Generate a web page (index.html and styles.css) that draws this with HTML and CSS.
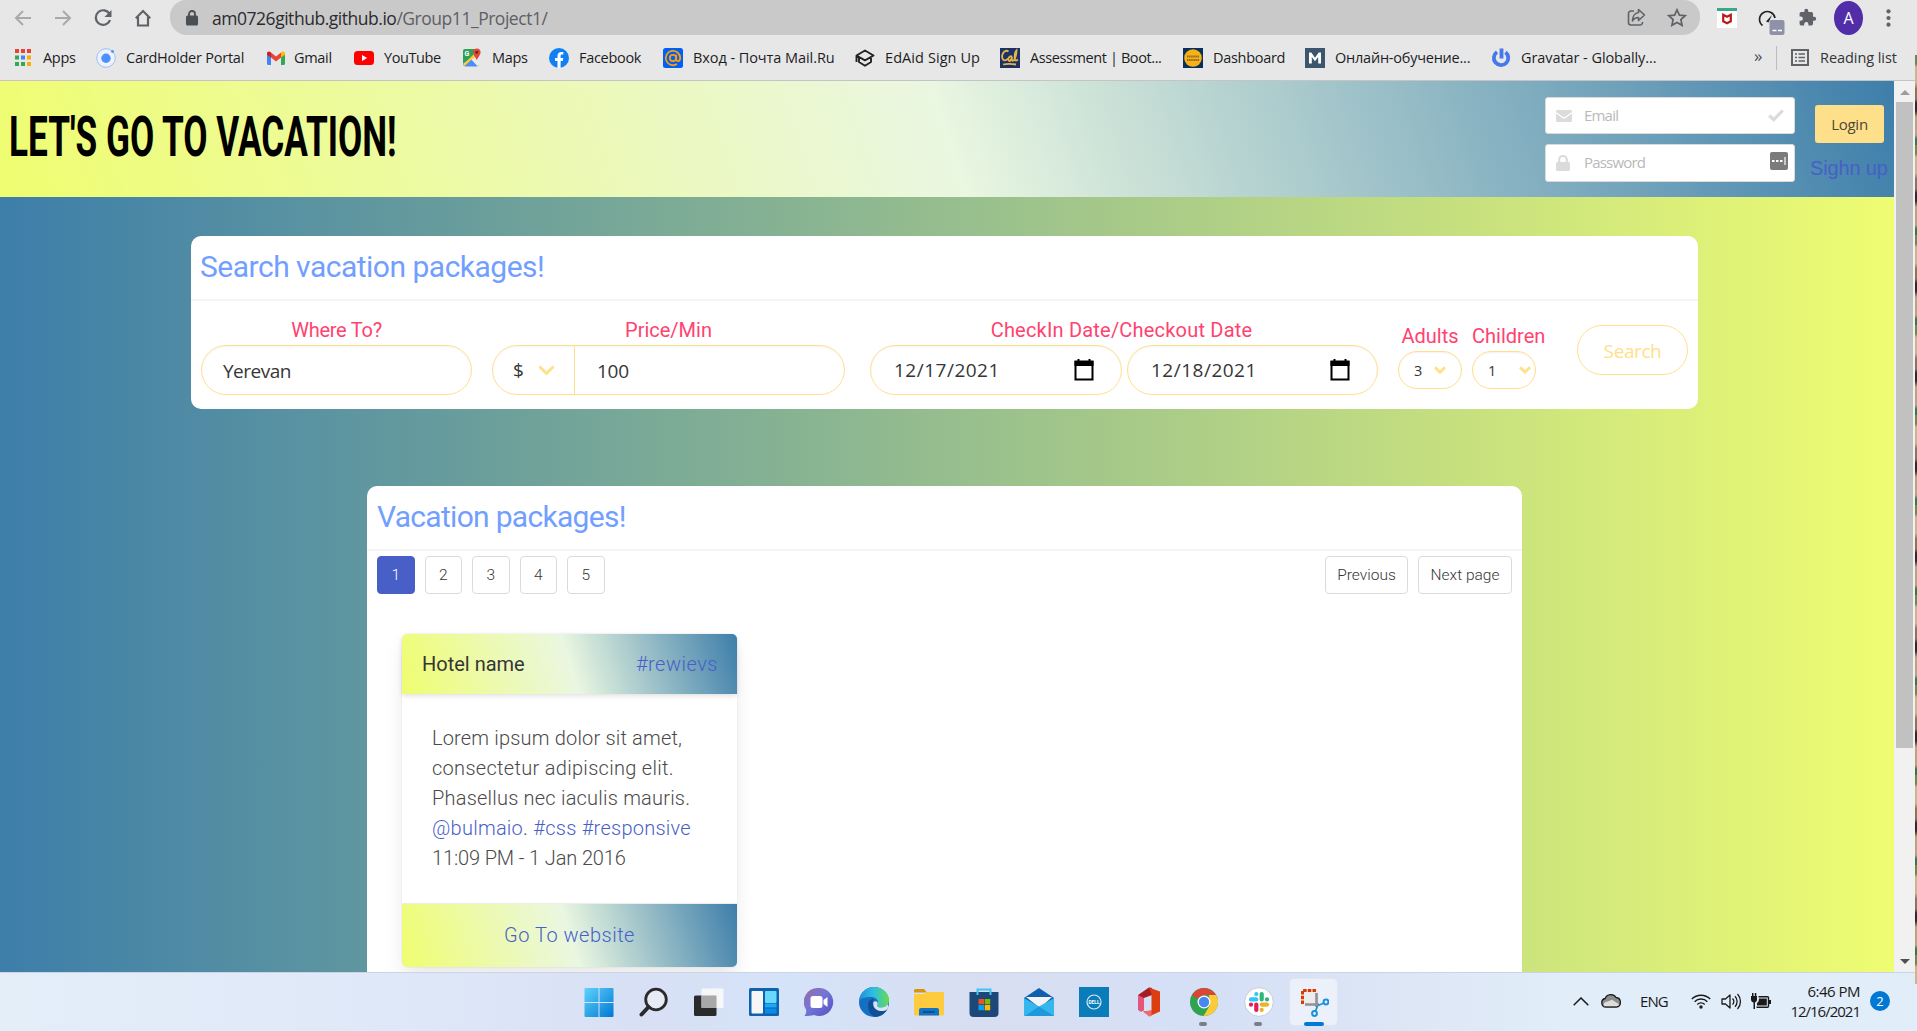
FILE: index.html
```html
<!DOCTYPE html>
<html lang="en">
<head>
<meta charset="utf-8">
<title>Let's go to vacation!</title>
<link rel="stylesheet" href="styles.css">
</head>
<body>
<header class="browser">
  <div class="toolbar">
    <div class="nav-buttons">
      <svg width="18" height="18" viewBox="0 0 18 18" fill="none" stroke="#a9a9aa" stroke-width="2"><path d="M17 9H2M9 2L2 9l7 7"/></svg>
      <svg width="18" height="18" viewBox="0 0 18 18" fill="none" stroke="#a9a9aa" stroke-width="2"><path d="M1 9h15M9 2l7 7-7 7"/></svg>
      <svg width="18" height="18" viewBox="0 0 18 18" fill="none" stroke="#5f6368" stroke-width="2.2"><path d="M15.5 5A7.3 7.3 0 1 0 16 11"/><path d="M17.5 1v7h-7z" fill="#5f6368" stroke="none"/></svg>
      <svg width="18" height="18" viewBox="0 0 18 18" fill="none" stroke="#5f6368" stroke-width="2.2"><path d="M1.8 9.2L9 2l7.2 7.2M4 8v8.5h10V8"/></svg>
    </div>
    <div class="omnibox">
      <svg width="12" height="16" viewBox="0 0 12 16"><rect y="5.5" width="12" height="10" rx="1.5" fill="#4b4e52"/><path d="M3 6V4a3 3 0 0 1 6 0v2" fill="none" stroke="#4b4e52" stroke-width="1.8"/></svg>
      <span class="url">am0726github.github.io<span class="path">/Group11_Project1/</span></span>
      <svg class="share" width="19" height="19" viewBox="0 0 19 19" fill="none" stroke="#5f6368" stroke-width="1.6" stroke-linejoin="round"><path d="M7 3H4a2.5 2.5 0 0 0-2.500 2.500v9A2.500 2.500 0 0 0 4 17h9a2.500 2.500 0 0 0 2.500-2.500V14"/><path d="M11.500 1.500L17.500 7l-6 5.500V9.500C8.500 9.500 6.500 11 5.500 13c0-4 2-8 6-8.500z"/></svg>
      <svg width="20" height="19" viewBox="0 0 20 19" fill="none" stroke="#5f6368" stroke-width="1.700"><path d="M10 1.800l2.400 5.300 5.800.6-4.300 3.900 1.200 5.700L10 14.400l-5.100 2.900 1.200-5.700-4.300-3.900 5.800-.6z"/></svg>
    </div>
    <div class="extensions">
      <svg width="20" height="20" viewBox="0 0 20 20"><rect width="20" height="20" fill="#fff"/><rect width="20" height="3" fill="#3aa68a"/><path d="M6.200 6.800l3.800 2 3.800-2v6.500l-3.800 2-3.800-2z" fill="none" stroke="#c01818" stroke-width="2.200"/></svg>
      <svg width="27" height="27" viewBox="0 0 27 27"><path d="M4.500 17.500A7.800 7.800 0 1 1 17 10" fill="none" stroke="#222" stroke-width="1.700"/><path d="M8 13.500L14 7l-3.500 7.500z" fill="#222"/><rect x="11.500" y="12" width="15" height="15" rx="2" fill="#8e92a8"/><path d="M14.500 22.500h4M20 22.500h4" stroke="#fff" stroke-width="1.500"/></svg>
      <svg width="19" height="19" viewBox="0 0 24 24"><path fill="#5f6368" d="M20.500 11H19V7a2 2 0 0 0-2-2h-4V3.500a2.500 2.500 0 0 0-5 0V5H4a2 2 0 0 0-2 2v3.800h1.500a2.700 2.700 0 0 1 0 5.400H2V20a2 2 0 0 0 2 2h3.800v-1.500a2.700 2.700 0 0 1 5.400 0V22H17a2 2 0 0 0 2-2v-4h1.500a2.500 2.500 0 0 0 0-5z"/></svg>
      <span class="avatar">A</span>
      <svg width="5" height="18" viewBox="0 0 5 18" fill="#5f6368"><circle cx="2.500" cy="2.300" r="2.100"/><circle cx="2.500" cy="9" r="2.100"/><circle cx="2.500" cy="15.700" r="2.100"/></svg>
    </div>
  </div>
  <nav class="bookmarks">
    <a class="bm apps"><svg width="16" height="17" viewBox="0 0 16 17"><path fill="#ea4335" d="M0 0h4v4H0zM6 0h4v4H6zM12 0h4v4h-4z"/><path fill="#34a853" d="M0 6.500h4v4H0zM0 13h4v4H0zM6 13h4v4H6z"/><path fill="#4285f4" d="M6 6.500h4v4H6z"/><path fill="#fbac05" d="M12 6.500h4v4h-4zM12 13h4v4h-4z"/></svg><span>Apps</span></a>
    <a class="bm"><svg width="20" height="20" viewBox="0 0 20 20"><circle cx="10" cy="10" r="9.300" fill="#eef2fa" stroke="#9fbdf0"/><circle cx="10" cy="10.300" r="4.700" fill="#4d90fe"/><circle cx="16.500" cy="3.500" r="1.400" fill="#4d90fe"/></svg><span>CardHolder Portal</span></a>
    <a class="bm"><svg width="20" height="20" viewBox="0 0 20 20"><path fill="#4285f4" d="M1 5v10.500A1.500 1.500 0 0 0 2.500 17H5V8.500z"/><path fill="#34a853" d="M15 17h2.500a1.500 1.500 0 0 0 1.500-1.500V5l-4 3.500z"/><path fill="#ea4335" d="M5 4.500l5 4 5-4v5L10 13.500l-5-4z"/><path fill="#c5221f" d="M1 5.500C1 3.300 3.300 2.800 5 4.500v5L1 6.700z"/><path fill="#fbbc04" d="M19 5.500c0-2.200-2.300-2.700-4-1v5l4-2.800z"/></svg><span>Gmail</span></a>
    <a class="bm"><svg width="20" height="20" viewBox="0 0 20 20"><rect y="3" width="20" height="14" rx="3.500" fill="#f00"/><path d="M8 7l5.200 3L8 13z" fill="#fff"/></svg><span>YouTube</span></a>
    <a class="bm"><svg width="20" height="20" viewBox="0 0 20 20"><rect x="1" y="1" width="16" height="17" rx="2" fill="#2fa05a"/><path d="M1 16L14 6l3 3v8l-2 1z" fill="#e8eaed"/><path d="M3 18l6-7 6 7z" fill="#4f8df5"/><path d="M1 17L14 4l2 2L3 18z" fill="#fbce2d"/><path d="M2.500 18.500L9 12l6.500 6.500z" fill="#4f8df5"/><text x="2.500" y="8" font-size="7" font-family="Roboto" font-weight="700" fill="#fff">G</text><path d="M14.800 12C13 8.500 11 7 11 4.300a3.800 3.800 0 0 1 7.600 0C18.600 7 16.500 8.500 14.800 12z" fill="#dd4b3e"/><circle cx="14.800" cy="4.300" r="1.400" fill="#6f1d12"/></svg><span>Maps</span></a>
    <a class="bm"><svg width="20" height="20" viewBox="0 0 20 20"><circle cx="10" cy="10" r="10" fill="#1081f2"/><path fill="#fff" d="M8.500 20v-7H6v-3h2.500V7.800c0-2.500 1.500-3.900 3.800-3.900l2 .2v2.500h-1.200c-1.200 0-1.500.7-1.500 1.500V10h2.700l-.5 3h-2.200v7z"/></svg><span>Facebook</span></a>
    <a class="bm"><svg width="20" height="20" viewBox="0 0 20 20"><rect width="20" height="20" rx="2.500" fill="#005ff9"/><g fill="none" stroke="#ff9e00" stroke-width="1.800"><circle cx="10" cy="10" r="3.200"/><path d="M13.200 6.800V11c0 3 4 3 4-1A7.200 7.200 0 1 0 14 16"/></g></svg><span>Вход - Почта Mail.Ru</span></a>
    <a class="bm"><svg width="20" height="20" viewBox="0 0 20 20" fill="none" stroke="#222" stroke-width="1.900" stroke-linejoin="round"><path d="M1.500 7.500L10 2.500l8.500 5L10 12.300zM4 10v4l6 3.800 6-3.800v-4M1.500 8v6"/></svg><span>EdAid Sign Up</span></a>
    <a class="bm"><svg width="20" height="20" viewBox="0 0 20 20"><rect width="20" height="20" fill="#1d3264"/><path d="M8.500 3.500C5 1 1 6 2.500 10.500c1 3 4 2 5.500 0M12 8.500c-3-1.500-5 4-2.500 4.500 1.500 0 2-2 2.500-4.500-.5 3 0 5 1.500 4s3-6 3-10c-2 2-3 11 0 10l1.500-1M3 16.500c4-1 8-1 13 0" fill="none" stroke="#e5b64a" stroke-width="1.800"/></svg><span>Assessment | Boot...</span></a>
    <a class="bm"><svg width="20" height="20" viewBox="0 0 20 20"><rect width="20" height="20" fill="#0b2f5b"/><circle cx="10" cy="10" r="8.800" fill="#f9b215"/><path d="M4 8.500h12M4 12h12" stroke="#8a6a2a" stroke-width="1.800" stroke-dasharray="1.500 .6"/></svg><span>Dashboard</span></a>
    <a class="bm"><svg width="20" height="20" viewBox="0 0 20 20"><rect width="20" height="20" fill="#3d566e"/><path d="M4 15.500V4.500h2.300L10 9.700l3.700-5.200H16v11h-2.800V9L10 13.300 6.800 9v6.500z" fill="#fff"/></svg><span>Онлайн-обучение...</span></a>
    <a class="bm"><svg width="20" height="20" viewBox="0 0 20 20" fill="none" stroke="#4678eb" stroke-width="3.800"><path d="M10.500 .5v10M14.500 4.300a7.200 7.200 0 1 1-8.500-.3"/></svg><span>Gravatar - Globally...</span></a>
    <span class="more">»</span>
    <span class="reading"><svg width="18" height="17" viewBox="0 0 18 17"><path d="M1 1h16v15H1z" fill="none" stroke="#5f6368" stroke-width="2"/><path d="M4 5h2M4 8.500h2M4 12h2M7.500 5H14M7.500 8.500H14M7.500 12H14" stroke="#5f6368" stroke-width="1.700"/></svg><span>Reading list</span></span>
  </nav>
</header>

<div class="viewport">
  <main class="page">
    <section class="hero">
      <h1>LET'S GO TO VACATION!</h1>
      <form class="login">
        <div class="fields">
          <label class="field email"><svg width="16" height="12" viewBox="0 0 16 12" fill="#dbdbdb"><path d="M1.500 0h13A1.500 1.500 0 0 1 16 1.500V2L8 7.500 0 2v-.5A1.500 1.500 0 0 1 1.500 0zM0 3.500L8 9l8-5.500v7a1.500 1.500 0 0 1-1.500 1.500h-13A1.500 1.500 0 0 1 0 10.500z"/></svg><span>Email</span><svg width="16" height="13" viewBox="0 0 16 13" fill="none" stroke="#dbdbdb" stroke-width="3.200"><path d="M1.200 6.500l4.500 4.200 9-9.200"/></svg></label>
          <label class="field password"><svg width="14" height="16" viewBox="0 0 14 16"><rect y="7" width="14" height="9" rx="1.500" fill="#dbdbdb"/><path d="M3.200 8V4.800a3.800 3.800 0 0 1 7.600 0V8" fill="none" stroke="#dbdbdb" stroke-width="2.200"/></svg><span>Password</span><svg class="key" width="18" height="18" viewBox="0 0 18 18"><rect width="18" height="18" rx="2" fill="#7b7b7b"/><path d="M2 9h2.500M6 9h2.500M10 9h2.500" stroke="#fff" stroke-width="2.200"/><path d="M15 5v8" stroke="#fff" stroke-width="1.200"/></svg></label>
        </div>
        <div class="actions">
          <button type="button">Login</button>
          <a>Sighn up</a>
        </div>
      </form>
    </section>

    <section class="card search">
      <h2>Search vacation packages!</h2>
      <div class="filters">
        <div class="group where"><span class="label">Where To?</span><div class="pill"><span>Yerevan</span></div></div>
        <div class="group price"><span class="label">Price/Min</span>
          <div class="pill split"><span class="currency">$ <svg width="17" height="11" viewBox="0 0 17 11" fill="none" stroke="#ffe08a" stroke-width="3"><path d="M1.500 1.500l7 7 7-7"/></svg></span><span class="amount">100</span></div></div>
        <div class="group dates"><span class="label">CheckIn Date/Checkout Date</span>
          <div class="pair">
            <div class="pill date"><span>12/17/2021</span><svg width="20" height="22" viewBox="0 0 20 22"><path d="M1.500 2.500h17v18h-17z" fill="none" stroke="#000" stroke-width="2"/><path d="M.5 2h19v5H.5zM3.500 0h2v3h-2zM14.500 0h2v3h-2z"/></svg></div>
            <div class="pill date"><span>12/18/2021</span><svg width="20" height="22" viewBox="0 0 20 22"><path d="M1.500 2.500h17v18h-17z" fill="none" stroke="#000" stroke-width="2"/><path d="M.5 2h19v5H.5zM3.500 0h2v3h-2zM14.500 0h2v3h-2z"/></svg></div>
          </div></div>
        <div class="group small adults"><span class="label">Adults</span><div class="pill"><span>3</span><svg width="12" height="8" viewBox="0 0 12 8" fill="none" stroke="#ffe08a" stroke-width="2.800"><path d="M1 1.200l5 5 5-5"/></svg></div></div>
        <div class="group small children"><span class="label">Children</span><div class="pill"><span>1</span><svg width="12" height="8" viewBox="0 0 12 8" fill="none" stroke="#ffe08a" stroke-width="2.800"><path d="M1 1.200l5 5 5-5"/></svg></div></div>
        <button class="go" type="button">Search</button>
      </div>
    </section>

    <section class="card packages">
      <h2>Vacation packages!</h2>
      <div class="pagination">
        <a class="current">1</a><a>2</a><a>3</a><a>4</a><a>5</a>
        <a class="step previous">Previous</a><a class="step next">Next page</a>
      </div>
      <article class="hotel">
        <header><strong>Hotel name</strong><a>#rewievs</a></header>
        <div class="content">
          <p class="l1">Lorem ipsum dolor sit amet,</p>
          <p class="l2">consectetur adipiscing elit.</p>
          <p class="l3">Phasellus nec iaculis mauris.</p>
          <p class="l4"><a>@bulmaio</a>. <a>#css</a> <a>#responsive</a></p>
          <p class="l5">11:09 PM - 1 Jan 2016</p>
        </div>
        <footer><a>Go To website</a></footer>
      </article>
    </section>
  </main>
  <div class="scrollbar"><i class="up"></i><i class="thumb"></i><i class="down"></i></div>
</div>
<div class="wallpaper"></div>

<footer class="taskbar">
  <div class="apps-row">
    <span class="app"><svg width="30" height="30" viewBox="0 0 30 30"><defs><linearGradient id="win" x1="0" y1="0" x2="1" y2="1"><stop offset="0" stop-color="#5fd3fb"/><stop offset="1" stop-color="#0078d4"/></linearGradient></defs><path fill="url(#win)" d="M.5 2a1 1 0 0 1 1-1H14.500v14H.5zM15.500 1h13a1 1 0 0 1 1 1v13h-14zM.5 16h14v14h-13a1 1 0 0 1-1-1zM15.500 16h14v13a1 1 0 0 1-1 1h-13z"/></svg></span>
    <span class="app"><svg width="30" height="30" viewBox="0 0 30 30" fill="none" stroke="#2b2b2e"><circle cx="17" cy="12.500" r="10.300" stroke-width="2.800" fill="#e6ebf6"/><path d="M9.500 20l-7 7.500" stroke-width="4" stroke-linecap="round"/></svg></span>
    <span class="app"><svg width="30" height="30" viewBox="0 0 30 30"><rect x="0" y="8.500" width="22.500" height="20.500" rx="1.500" fill="#2b2b2b"/><rect x="7.500" y="1.500" width="22" height="19.500" rx="1" fill="#f8f8f8" fill-opacity=".92"/><path d="M7.500 8.500h15V21h-15z" fill="#a9a9a9"/></svg></span>
    <span class="app"><svg width="30" height="30" viewBox="0 0 30 30"><rect y="1" width="30" height="28" rx="1.500" fill="#0e62ae"/><rect x="2.500" y="4" width="11.500" height="22.500" rx="1" fill="#f6f6f6"/><rect x="16" y="4" width="11.500" height="12" rx="1" fill="#67d9fc"/><path d="M16 16.500h11.500v4H16z" fill="#1ba8f4"/><path d="M16 21.500h11.500v5H16z" fill="#0a8bea"/></svg></span>
    <span class="app"><svg width="30" height="30" viewBox="0 0 30 30"><defs><linearGradient id="chat" x1="0" y1="0" x2="1" y2="1"><stop offset="0" stop-color="#9a6ba5"/><stop offset=".45" stop-color="#7476d6"/><stop offset="1" stop-color="#5250c4"/></linearGradient></defs><path d="M15 1a14 14 0 1 1-5 27c-3 .8-6 1-9.500 1 1.500-2 2-4 1.500-6.500A14 14 0 0 1 15 1z" fill="url(#chat)"/><rect x="6.500" y="9" width="12" height="12" rx="2.500" fill="#fff"/><path d="M19.500 13l4-3v10l-4-3z" fill="#fff"/></svg></span>
    <span class="app"><svg width="30" height="30" viewBox="0 0 30 30"><defs><linearGradient id="edge"><stop offset="0" stop-color="#1d8fdc"/><stop offset=".5" stop-color="#2fc0e0"/><stop offset="1" stop-color="#66db4a"/></linearGradient></defs><circle cx="15" cy="15" r="15" fill="#1470c2"/><path d="M0 14C1 5 8 0 15 0c8 0 15 5.500 15 13 0 5-4 7.500-8 7.500-3.500 0-4.500-1.500-3.500-3 2-3-1-7.500-6-7.500C6 9.500 1 12 0 14z" fill="url(#edge)"/><path d="M9 18c0-4 3-6.500 6-6-3 4-1 11 6 12 3 .3 5.500-.5 7.500-2C26 27 21 30 16 30c-5-2-7-7-7-12z" fill="#104f97"/><path d="M18.500 17.500c-1 1.500 0 3 3.500 3 2.500 0 5.500-1 7-3.500 0 2 .5 3.500-1 5.500-2 1.500-4.500 1.800-7 1.500-5-.8-7.500-5-6.500-9 2-1.500 5-.5 4 2.500z" fill="#dbe3f6"/></svg></span>
    <span class="app"><svg width="30" height="30" viewBox="0 0 30 30"><path d="M0 3.500A1.500 1.500 0 0 1 1.500 2H10l3 3.500H0z" fill="#d7960b"/><path d="M0 7h10l2.500-2H29a1 1 0 0 1 1 1v21.500a1 1 0 0 1-1 1H1a1 1 0 0 1-1-1z" fill="#fecb3e"/><path d="M5 28.500V23a2 2 0 0 1 2-2h16a2 2 0 0 1 2 2v5.500z" fill="#1272c4"/><path d="M9 25h12" stroke="#0a4586" stroke-width="1.500"/></svg></span>
    <span class="app"><svg width="30" height="30" viewBox="0 0 30 30"><path d="M8.500 7V2.500h13V7" fill="none" stroke="#3ec5f2" stroke-width="2"/><path d="M.5 5h29v21a4 4 0 0 1-4 4h-21a4 4 0 0 1-4-4z" fill="#1b4878"/><path d="M8.500 8V5M21.500 8V5" stroke="#3ec5f2" stroke-width="2"/><path fill="#f25022" d="M9.500 12h5.500v5.300H9.500z"/><path fill="#7fba00" d="M15.700 12h5.500v5.300h-5.500z"/><path fill="#00a4ef" d="M9.500 18h5.500v5.300H9.500z"/><path fill="#ffb900" d="M15.700 18h5.500v5.300h-5.500z"/></svg></span>
    <span class="app"><svg width="30" height="30" viewBox="0 0 30 30"><path d="M0 11L15 1l15 10v8H0z" fill="#0f5fae"/><path d="M2 10h26l-12 11z" fill="#f3f3f3"/><path d="M0 11l15 8.500L30 11v17.500a.5.500 0 0 1-.5.500H.5a.5.500 0 0 1-.5-.5z" fill="#35b7ee"/><path d="M15 19.500L30 29H1z" fill="#1e98dc"/></svg></span>
    <span class="app"><svg width="30" height="30" viewBox="0 0 30 30"><rect width="30" height="30" fill="#0b7cba"/><circle cx="15" cy="15" r="7" fill="none" stroke="#d5eaf5" stroke-width="1.200"/><text x="15" y="17.200" text-anchor="middle" font-family="Roboto" font-weight="700" font-size="5.500" textLength="11" lengthAdjust="spacingAndGlyphs" fill="#fff">DELL</text></svg></span>
    <span class="app"><svg width="30" height="30" viewBox="0 0 30 30"><path d="M4 8L15 .5l3 .5v7l-8 3v12l-3 1.500-3-2z" fill="#a61d25"/><path d="M4 8l6 3v12l-4 1.500-2-2z" fill="#e6557a"/><path d="M15 .5l11 4v20l-10 4.500-7-4.500 8.500-1V7z" fill="#dc3e12"/><path d="M9 24.500l8.500-1V29L15 29.500z" fill="#f06a6a"/></svg></span>
    <span class="app open"><svg width="30" height="30" viewBox="0 0 30 30"><circle cx="15" cy="15" r="14" fill="#2fa350"/><path d="M2.900 8A14 14 0 0 1 27.100 8H15l-6.500 3.500z" fill="#db4437"/><path d="M27.100 8A14 14 0 0 1 14.500 29l6.300-10.500L20 8z" fill="#fdcb3a"/><circle cx="15" cy="15" r="6.500" fill="#fff"/><circle cx="15" cy="15" r="5.200" fill="#4587f3"/></svg></span>
    <span class="app open"><svg width="30" height="30" viewBox="0 0 30 30"><circle cx="15" cy="15" r="14.300" fill="#fff" stroke="#c9ced8"/><g stroke-width="4.200" stroke-linecap="round"><path d="M12.300 7v.1M7 12.400h5.300" stroke="#36c5f0"/><path d="M17.700 7v5.400M23 12.300v.1" stroke="#2eb67d"/><path d="M17.700 17.600H23M17.700 22.900v.1" stroke="#ecb22e"/><path d="M12.300 17.600V23M7 17.600v.1" stroke="#e01e5a"/></g></svg></span>
    <span class="app active"><svg width="30" height="30" viewBox="0 0 30 30"><rect x="2" y="2" width="18" height="18" rx="2" fill="#ececec"/><path d="M3.500 17V3.500H17" fill="none" stroke="#d83b01" stroke-width="3" stroke-dasharray="3.500 1.200"/><path d="M17.500 6v14M6 17.500h14" stroke="#8c9299" stroke-width="2.600"/><circle cx="27" cy="15" r="2.400" fill="none" stroke="#1b91d8" stroke-width="2"/><circle cx="15.500" cy="26.500" r="2.400" fill="none" stroke="#1b91d8" stroke-width="2"/><path d="M19 18.500l6-2.500M18.500 19l-2 5" stroke="#1b91d8" stroke-width="1.800"/></svg></span>
  </div>
  <div class="tray">
    <svg class="chev" width="16" height="9" viewBox="0 0 16 9" fill="none" stroke="#1a1a1a" stroke-width="1.500"><path d="M.7 8.300L8 1l7.300 7.300"/></svg>
    <svg class="cloud" width="20" height="15" viewBox="0 0 20 15"><path d="M5 14a4.300 4.300 0 0 1-.8-8.500A6 6 0 0 1 15 4.500a4.800 4.800 0 0 1 .5 9.500z" fill="#8d8d8d" stroke="#1a1a1a" stroke-width="1.300"/><path d="M3 13.300c-1-3 1-4.500 3-4.500l5-2 7 4.500c-.5 1.500-1.500 2-3 2z" fill="#dedede"/></svg>
    <span class="lang">ENG</span>
    <svg class="wifi" width="20" height="16" viewBox="0 0 20 16" fill="none" stroke="#1a1a1a" stroke-width="1.400"><path d="M.8 6a13 13 0 0 1 18.400 0M3.600 8.700a9 9 0 0 1 12.800 0M6.300 11.400a5.200 5.200 0 0 1 7.400 0"/><circle cx="10" cy="14" r="1.700" fill="#1a1a1a" stroke="none"/></svg>
    <svg class="vol" width="21" height="17" viewBox="0 0 21 17" fill="none" stroke="#1a1a1a" stroke-width="1.300" stroke-linejoin="round"><path d="M1 6h3.500L9 2v13l-4.500-4H1zM11.500 5.500a4 4 0 0 1 0 6M14 3.300a7.500 7.500 0 0 1 0 10.400M16.500 1a11 11 0 0 1 0 15"/></svg>
    <svg class="bat" width="20" height="16" viewBox="0 0 20 16"><path d="M0 3h6v4a3 3 0 0 1-2 2.500V16H2.500V9.500A3 3 0 0 1 0 7zM1 0h1.500v3H1zM3.800 0h1.500v3H3.800z" fill="#1a1a1a"/><path d="M7.500 3.700h9a1 1 0 0 1 1 1v8.600a1 1 0 0 1-1 1H5.500" fill="none" stroke="#1a1a1a" stroke-width="1.400"/><path d="M8 5.500h7.800v7H6V10c1.500-1 2-2 2-4.500zM18 7h2v4h-2z" fill="#1a1a1a"/></svg>
    <div class="clock"><span>6:46 PM</span><span class="day">12/16/2021</span></div>
    <span class="badge">2</span>
  </div>
</footer>
</body>
</html>
```
FILE: styles.css
```css
* { box-sizing: border-box; margin: 0; padding: 0; }
body {
  width: 1917px; height: 1031px; overflow: hidden;
  display: flex; flex-direction: column;
  background: #fff; font-family: "Open Sans", "Noto Sans", sans-serif; color: #363636;
}
svg { display: block; flex: none; }
button { font-family: inherit; }

/* browser chrome */
.browser { height: 81px; background: #e7e7e7; border-bottom: 1px solid #c4c4c6; flex: none; }
.toolbar { height: 35px; display: flex; align-items: center; }
.nav-buttons { width: 170px; padding-left: 14px; display: flex; gap: 22px; }
.omnibox {
  width: 1530px; height: 35px; padding: 0 13px 0 16px;
  display: flex; align-items: center; background: #c9c9c9; border-radius: 16px 16px 17px 17px;
}
.url { margin-left: 14px; font-size: 17.5px; letter-spacing: -.47px; color: #2b2c2f; white-space: nowrap; }
.path { color: #5d6064; }
.share { margin-left: auto; margin-right: 21px; }
.extensions { display: flex; align-items: center; padding-left: 17px; }
.extensions svg:nth-child(2) { margin: 8px 13px 0 21px; }
.avatar {
  width: 29px; height: 34px; margin: 0 23px 0 17px; border-radius: 50%; background: #512da8; color: #fff;
  font-size: 16px; display: grid; place-items: center;
}
.bookmarks {
  height: 45px; padding-left: 15px; display: grid; align-items: center;
  grid-template-columns: 81px 170px 88px 108px 87px 114px 192px 145px 183px 122px 186px 263px 22px 141px;
}
.bm { display: flex; align-items: center; gap: 10px; font-size: 14.5px; color: #1d1d1f; white-space: nowrap; letter-spacing: -.3px; }
.apps { gap: 12px; }
.bm:nth-child(2), .bm:nth-child(11) { letter-spacing: -.23px; }
.bm:nth-child(4), .bm:nth-child(9) { letter-spacing: -.4px; }
.bm:nth-child(7), .bm:nth-child(12) { letter-spacing: -.07px; }
.bm:nth-child(8) { letter-spacing: .08px; }
.bm:nth-child(3) { gap: 8px; }
.more { font-size: 17px; color: #4a4d51; line-height: 20px; margin-top: -4px; }
.reading {
  height: 24px; padding-left: 14px; border-left: 1px solid #bcbdc0;
  display: flex; align-items: center; gap: 11px; font-size: 14.5px; letter-spacing: -.06px; color: #333539; white-space: nowrap;
}

/* page */
.viewport { height: 891px; display: flex; flex: none; }
.page {
  width: 1894px; height: 891px; overflow: hidden;
  display: flex; flex-direction: column; align-items: center;
  background: linear-gradient(90deg, #3d7eaa, #effd72);
}
.hero, .hotel > header, .hotel > footer { background: linear-gradient(72deg, #effd70, #eaf7e1 50%, #3d7eaa); }
.hero { width: 100%; height: 116px; flex: none; display: flex; justify-content: space-between; }
h1 {
  margin-left: 9px; padding-top: 22px; font: 700 56px/68px Roboto, sans-serif; color: #000; white-space: nowrap;
  transform: scaleX(.628); transform-origin: 0 0; width: 640px;
}
.login { display: flex; }
.fields { padding-top: 16px; margin-right: 20px; display: flex; flex-direction: column; gap: 10px; }
.field {
  width: 250px; height: 37px; padding: 0 10px; display: flex; align-items: center;
  background: #fff; border: 1px solid #dbdbdb; border-radius: 3px; font-size: 15px; color: #b9b9b9;
}
.field span { margin: -2px 0 0 12px; flex: 1; letter-spacing: -.8px; }
.password { height: 38px; }
.password span { margin-left: 14px; }
.key { margin: -4px -4px 0 0; }
.actions { width: 79px; padding-top: 24px; }
.actions button {
  width: 69px; height: 38px; border: 0; border-radius: 3px; background: #ffe08a;
  font-size: 15px; letter-spacing: -.25px; color: #4a4737;
}
.actions a { display: block; margin: 12px 0 0 -5px; font: 20px/26px "Liberation Sans", sans-serif; letter-spacing: -.14px; color: #485fc7; white-space: nowrap; }

.card { background: #fff; border-radius: 10px; flex: none; }
h2 {
  height: 65px; padding: 13px 10px 0 9px; border-bottom: 2px solid #f5f5f5;
  font: 450 30px/36px Roboto, sans-serif; color: #729fff; white-space: nowrap; letter-spacing: -.5px;
}
.search { width: 1507px; height: 173px; margin: 39px 5px 0 0; }
.filters { display: flex; padding: 16px 10px 0; }
.group { display: flex; flex-direction: column; align-items: center; white-space: nowrap; }
.label { height: 28px; font: 450 20px/26px Roboto, sans-serif; color: #ff4270; }
.pill {
  width: 100%; height: 50px; border: 1px solid #ffe08a; border-radius: 25px; padding: 0 22px;
  display: flex; align-items: center; justify-content: space-between;
  box-shadow: inset 0 1px 2px rgba(10, 10, 10, .05); font-size: 19px; color: #363636;
}
.where { width: 271px; margin-right: 20px; }
.where .label { letter-spacing: -.25px; }
.where .pill { letter-spacing: -.5px; padding: 1px 0 0 21px; }
.price { width: 353px; margin-right: 25px; }
.split { padding: 0; }
.currency { width: 82px; height: 48px; padding-left: 20px; border-right: 1px solid #ffe08a; display: flex; align-items: center; gap: 14px; }
.amount { flex: 1; padding: 1px 0 0 22px; letter-spacing: -.3px; }
.dates { width: 508px; margin-right: 20px; }
.dates .label { letter-spacing: .2px; margin-right: 5px; }
.pair { width: 100%; display: grid; grid-template-columns: 252px 251px; gap: 5px; }
.date { padding: 0 27px 0 23px; letter-spacing: .5px; }
.date svg { margin-top: -1px; }
.small { width: 64px; margin: 6px 10px 0 0; }
.small .pill { height: 38px; border-radius: 19px; padding: 0 15px; font-size: 14.500px; }
.children { align-items: flex-start; margin-right: 41px; }
.children .pill { padding-right: 4px; }
.go {
  width: 111px; height: 50px; margin-top: 8px; border: 1px solid #ffe08a; border-radius: 25px;
  background: #fff; color: #ffe08a; font-size: 19px; letter-spacing: -.4px; padding-top: 1px;
}

.packages { width: 1155px; height: 560px; margin: 77px 5px 0 0; }
.packages h2 { letter-spacing: -.7px; padding-left: 10px; }
.pagination { display: flex; gap: 10px; padding: 5px 10px 0; }
.pagination a {
  width: 37.500px; height: 38px; border: 1px solid #dbdbdb; border-radius: 4px; display: grid; place-items: center;
  font: 300 15.500px Roboto, sans-serif; white-space: nowrap;
}
.pagination .current { background: #485fc7; border-color: #485fc7; color: #fff; }
.pagination .step { width: 94px; }
.pagination .previous { width: 83px; margin-left: auto; }

.hotel {
  width: 335px; margin: 40px 0 0 35px; border-radius: 5px;
  box-shadow: 0 10px 20px -2px rgba(10, 10, 10, .1), 0 0 0 1px rgba(10, 10, 10, .02);
  font: 300 20px/30px Roboto, sans-serif;
}
.hotel a { color: #485fc7; }
.hotel > header {
  height: 60px; padding: 0 19px 0 20px; display: flex; justify-content: space-between; align-items: center;
  border-radius: 5px 5px 0 0; box-shadow: 0 2px 5px rgba(10, 10, 10, .12);
}
.hotel strong { font-weight: 450; }
.hotel > header a { letter-spacing: .5px; }
.content { height: 210px; padding: 29px 30px 0; color: #4a4a4a; border-bottom: 1px solid #ededed; white-space: nowrap; }
.l1 { letter-spacing: .18px; }
.l2 { letter-spacing: .3px; }
.l3 { letter-spacing: .21px; }
.l4 { letter-spacing: .26px; }
.l5 { letter-spacing: -.13px; }
.hotel > footer { height: 63px; display: grid; place-items: center; border-radius: 0 0 5px 5px; letter-spacing: .5px; padding-bottom: 2px; }

.scrollbar { width: 21px; background: #f1f1f1; padding: 0 2px; display: flex; flex-direction: column; align-items: center; }
.up, .down { width: 0; height: 0; border: 5px solid transparent; }
.up { border-top: 0; border-bottom-color: #9c9c9c; margin: 9px 0 7px; }
.thumb { width: 17px; height: 646px; background: #c1c1c1; }
.down { border-bottom: 0; border-top-color: #505050; margin-top: auto; margin-bottom: 8px; }
.wallpaper {
  position: absolute; left: 1915px; top: 55px; width: 2px; height: 929px;
  background: repeating-linear-gradient(#6a8a4c 0 9px, #cbb48f 12px 28px, #8a7358 34px 44px, #2f2a22 48px 56px, #b9a27e 62px 80px, #2f7a48 84px 90px);
}

/* taskbar */
.taskbar {
  flex: none; height: 59px; display: flex; justify-content: space-between; border-top: 1px solid #cbd3e4;
  background: linear-gradient(90deg, #e4eef9 0, #dfe8f8 400px, #d8e0f5 640px, #d5e3f8 790px, #d8def1 980px, #d5e0f7 1210px, #dde6f5 1400px, #e1edf9 1560px);
}
.apps-row { display: flex; padding-left: 574px; gap: 6px; }
.app { width: 49px; height: 58px; display: grid; place-items: center; padding-bottom: 1px; position: relative; }
.open::after, .active::after { content: ""; position: absolute; left: 20px; bottom: 5px; width: 8px; height: 4px; border-radius: 2px; background: #797f89; }
.active { height: 48px; margin-top: 5px; padding-top: 1px; background: #ebf0fa; border: 1px solid #e0e5ef; border-radius: 5px; }
.active::after { left: 14px; bottom: -1px; width: 20px; background: #0078d4; }
.tray { display: flex; align-items: center; padding: 0 27px 2px 0; color: #1a1a1a; font-size: 15px; }
.cloud { margin: -2px 19px 0 12px; }
.lang { width: 28px; letter-spacing: -.9px; }
.wifi { margin-left: 23px; }
.vol { margin-left: 10px; }
.bat { margin-left: 9px; }
.clock { width: 89px; margin-right: 1px; display: flex; flex-direction: column; align-items: flex-end; line-height: 20px; letter-spacing: -.5px; padding-bottom: 1px; }
.day { letter-spacing: -1px; }
.badge { width: 20px; height: 20px; margin-left: 9px; border-radius: 50%; background: #0078d4; color: #fff; font-size: 13px; display: grid; place-items: center; }
```
